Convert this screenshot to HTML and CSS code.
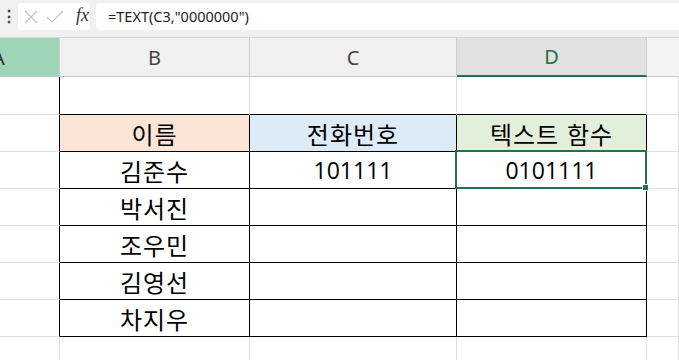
FILE: index.html
```html
<!DOCTYPE html>
<html lang="ko">
<head>
    <meta charset="UTF-8">
    <meta name="viewport" content="width=device-width, initial-scale=1.0">
    <title>TEXT 함수</title>
    <link rel="stylesheet" href="styles.css">
</head>
<body>
    <!-- 수식 입력줄 -->
    <div class="topbar">
        <span class="dots">&#8942;</span>
        <div class="fx-box">
            <svg class="ico" width="14" height="14" viewBox="0 0 14 14">
                <path d="M1 1 L13 13 M13 1 L1 13" stroke="#c4c4c4" stroke-width="1.2" fill="none"/>
            </svg>
            <svg class="ico" width="18" height="14" viewBox="0 0 18 14">
                <path d="M1 7 L6 12 L17 1" stroke="#c4c4c4" stroke-width="1.2" fill="none"/>
            </svg>
            <span class="fx">fx</span>
        </div>
        <div class="formula">=TEXT(C3,"0000000")</div>
    </div>

    <div class="sheet">
        <div class="col-head sel-col">A</div>
        <div class="col-head">B</div>
        <div class="col-head">C</div>
        <div class="col-head active">D</div>
        <div class="col-head last"></div>

        <div class="cell first edge-r"></div>
        <div class="cell first top-b"></div>
        <div class="cell first top-b"></div>
        <div class="cell first top-b"></div>
        <div class="cell first"></div>

        <div class="cell edge-r"></div>
        <div class="cell box name-h">이름</div>
        <div class="cell box tel-h">전화번호</div>
        <div class="cell box txt-h">텍스트 함수</div>
        <div class="cell"></div>

        <div class="cell edge-r"></div>
        <div class="cell box">김준수</div>
        <div class="cell box num">101111</div>
        <div class="cell box num selected">0101111</div>
        <div class="cell"></div>

        <div class="cell edge-r"></div>
        <div class="cell box">박서진</div>
        <div class="cell box"></div>
        <div class="cell box"></div>
        <div class="cell"></div>

        <div class="cell edge-r"></div>
        <div class="cell box">조우민</div>
        <div class="cell box"></div>
        <div class="cell box"></div>
        <div class="cell"></div>

        <div class="cell edge-r"></div>
        <div class="cell box">김영선</div>
        <div class="cell box"></div>
        <div class="cell box"></div>
        <div class="cell"></div>

        <div class="cell edge-r"></div>
        <div class="cell box">차지우</div>
        <div class="cell box"></div>
        <div class="cell box"></div>
        <div class="cell"></div>

        <div class="cell"></div>
        <div class="cell"></div>
        <div class="cell"></div>
        <div class="cell"></div>
        <div class="cell"></div>
    </div>
</body>
</html>
```

FILE: styles.css
```css
body {
    margin: 0;
    padding: 0;
    background: #fff;
    font-family: "Noto Sans", "Noto Sans CJK KR", sans-serif;
    color: #000;
    overflow: hidden;
}

.topbar {
    height: 38px;
    box-sizing: border-box;
    background: #f0f0f0;
    border-bottom: 1px solid #d6d6d6;
    display: flex;
    align-items: flex-start;
    padding-top: 3px;
}

.dots {
    width: 18px;
    text-align: center;
    font-size: 16px;
    line-height: 27px;
    color: #444;
    font-weight: bold;
}

.fx-box {
    width: 72px;
    height: 27px;
    box-sizing: border-box;
    background: #fff;
    border-radius: 4px;
    display: flex;
    align-items: center;
    padding-left: 6px;
    gap: 8px;
}

.fx {
    font-family: "Liberation Serif", "DejaVu Serif", serif;
    font-style: italic;
    font-size: 18px;
    color: #333;
    margin-left: 4px;
    margin-top: -2px;
}

.formula {
    flex: 1;
    margin-left: 6px;
    height: 27px;
    box-sizing: border-box;
    background: #fff;
    border-radius: 4px 0 0 4px;
    padding-left: 12px;
    font-size: 14.5px;
    line-height: 27px;
    color: #222;
}

.sheet {
    display: grid;
    grid-template-columns: 60px 190px 207px 190px 1fr;
    grid-template-rows: 39px 38px repeat(6, 37px) 40px;
}

.col-head {
    box-sizing: border-box;
    background: #f0f0f0;
    border-right: 1px solid #cdcdcd;
    border-bottom: 1px solid #c6c6c6;
    font-size: 20px;
    color: #444;
    display: flex;
    align-items: center;
    justify-content: center;
}

.col-head.sel-col {
    background: #9fd5b7;
    justify-content: flex-start;
    text-indent: -8px;
    color: #333;
}

.col-head.active {
    background: #e1e1e1;
    color: #217346;
    border-bottom: 2px solid #217346;
}

.col-head.last {
    background: #f3f3f3;
    border-right: none;
}

.cell {
    position: relative;
    box-sizing: border-box;
    border-right: 1px solid #e1e1e1;
    border-bottom: 1px solid #e1e1e1;
    display: flex;
    align-items: center;
    justify-content: center;
    font-family: "Noto Sans CJK KR", sans-serif;
    font-size: 24px;
    letter-spacing: 1px;
}

.cell.edge-r {
    border-right-color: #000;
}

.cell.top-b {
    border-bottom-color: #000;
}

.cell.box {
    border-right-color: #000;
    border-bottom-color: #000;
}

.cell.num {
    font-family: "Open Sans", sans-serif;
    font-size: 23px;
    letter-spacing: 0;
}

.name-h { background: #fce4d6; }
.tel-h { background: #ddebf7; }
.txt-h { background: #e2efda; }

.cell.selected::after {
    content: "";
    position: absolute;
    top: -2px;
    left: -2px;
    right: -1px;
    bottom: -1px;
    border: 2px solid #217346;
}

.cell.selected::before {
    content: "";
    position: absolute;
    right: -3px;
    bottom: -3px;
    width: 5px;
    height: 5px;
    background: #217346;
    border: 1px solid #fff;
    z-index: 2;
}
```
